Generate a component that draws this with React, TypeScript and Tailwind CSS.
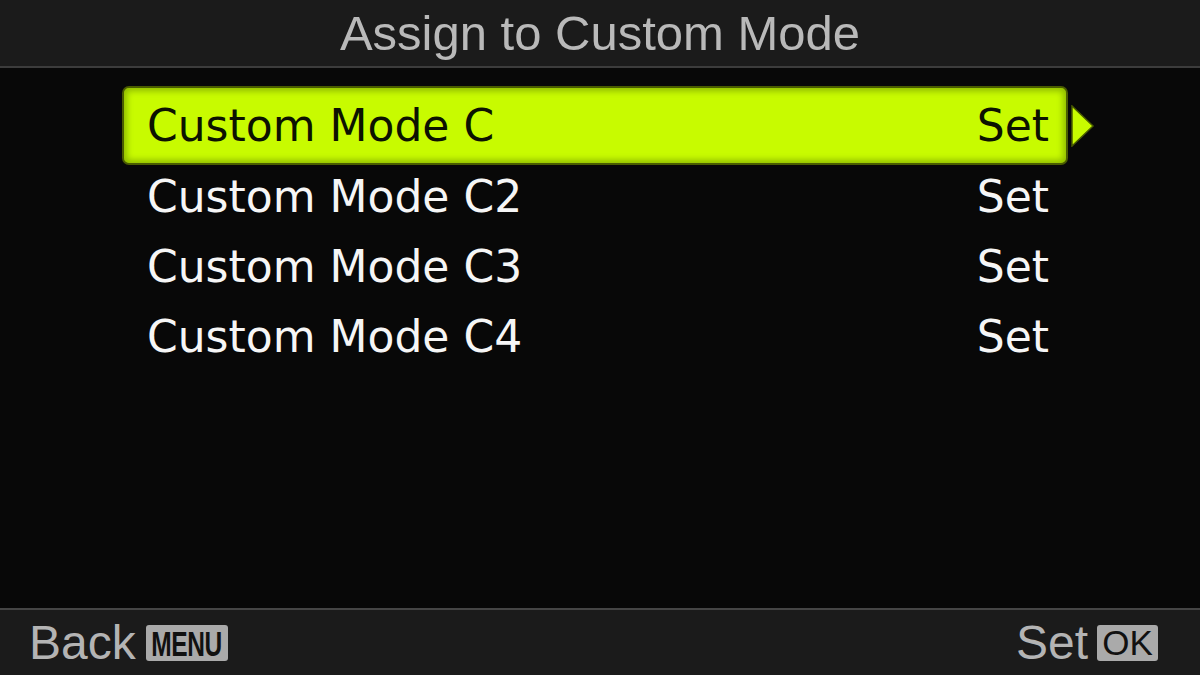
import React from "react";

const items = ["Custom Mode C", "Custom Mode C2", "Custom Mode C3", "Custom Mode C4"];

export default function App() {
  return (
    <div className="w-[1200px] h-[675px] bg-[#080808] flex flex-col overflow-hidden">
      <div className="h-[68px] shrink-0 bg-[#1b1b1b] border-b-2 border-[#3c3c3c] flex items-center justify-center">
        <span
          className="text-[49px] leading-none text-[#b9b9b9] mt-[1px]"
          style={{ fontFamily: '"Liberation Sans", Arial, sans-serif' }}
        >
          Assign to Custom Mode
        </span>
      </div>
      <div
        className="flex-1 flex flex-col pl-[122px] pt-[18px]"
        style={{ fontFamily: '"DejaVu Sans", Verdana, sans-serif' }}
      >
        <div className="flex items-center">
          <div className="w-[946px] h-[79px] rounded-[7px] border-2 border-[#4a5c00] bg-[#c8fb00] shadow-[inset_0_0_6px_3px_#8fbb00] flex items-center justify-between pl-[23px] pr-[17px] text-[#0c1200]">
            <span className="text-[44px] leading-none">{items[0]}</span>
            <span className="text-[44px] leading-none">Set</span>
          </div>
          <svg width="25" height="42" viewBox="0 0 25 42" className="ml-[2px] mt-[1px]">
            <polygon points="2,1 23,21 2,41" fill="#c8fb00" stroke="#4a5c00" strokeWidth="1.5" />
          </svg>
        </div>
        <div className="-mt-[3px] flex flex-col">
          {items.slice(1).map((t) => (
            <div key={t} className="w-[946px] h-[70px] flex items-center justify-between pl-[25px] pr-[19px] text-[#f6f6f6]">
              <span className="text-[44px] leading-none">{t}</span>
              <span className="text-[44px] leading-none">Set</span>
            </div>
          ))}
        </div>
      </div>
      <div
        className="h-[67px] shrink-0 bg-[#1b1b1b] border-t-2 border-[#454545] flex items-center justify-between pl-[29px] pr-[42px]"
        style={{ fontFamily: '"Liberation Sans", Arial, sans-serif' }}
      >
        <div className="flex items-center gap-[10px]">
          <span className="text-[48px] leading-none text-[#b4b4b4]">Back</span>
          <span className="w-[82px] h-[36px] rounded-[3px] bg-[#aaaaaa] text-[#111] flex items-center justify-center">
            <span className="text-[35px] font-bold leading-none scale-x-[0.7] tracking-[-0.5px] mt-[1px] -mx-[16px] whitespace-nowrap">MENU</span>
          </span>
        </div>
        <div className="flex items-center gap-[9px]">
          <span className="text-[48px] leading-none text-[#b4b4b4]">Set</span>
          <span className="w-[61px] h-[36px] rounded-[3px] bg-[#aaaaaa] text-[#111] flex items-center justify-center text-[35px] leading-none">
            OK
          </span>
        </div>
      </div>
    </div>
  );
}
